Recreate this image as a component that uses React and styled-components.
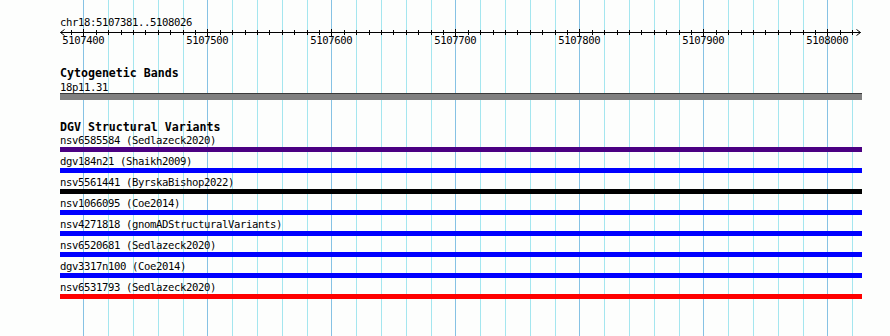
import React from 'react'
import styled, { createGlobalStyle } from 'styled-components'

const GlobalStyle = createGlobalStyle`
    html, body {
        margin: 0;
        padding: 0;
        background: #fdfefd;
    }
`

const START = 5107381
const END = 5108026
const PX_PER_BP = 1.24
const TRACK_LEFT = 60
const TRACK_WIDTH = 802
const ORIGIN = 83.3 - (5107400 - START) * PX_PER_BP

const toX = (bp) => ORIGIN + (bp - START) * PX_PER_BP
const crisp = (x) => Math.round(x) + 0.5

const variants = [
    { id: 'nsv6585584', study: 'Sedlazeck2020', color: '#4b0082' },
    { id: 'dgv184n21', study: 'Shaikh2009', color: '#0000ff' },
    { id: 'nsv5561441', study: 'ByrskaBishop2022', color: '#000000' },
    { id: 'nsv1066095', study: 'Coe2014', color: '#0000ff' },
    { id: 'nsv4271818', study: 'gnomADStructuralVariants', color: '#0000ff' },
    { id: 'nsv6520681', study: 'Sedlazeck2020', color: '#0000ff' },
    { id: 'dgv3317n100', study: 'Coe2014', color: '#0000ff' },
    { id: 'nsv6531793', study: 'Sedlazeck2020', color: '#ff0000' },
]

const Page = styled.div`
    position: relative;
    width: 890px;
    height: 336px;
    overflow: hidden;
    background: #fdfefd;
    font-family: "DejaVu Sans Mono", "Liberation Mono", monospace;
    color: #000;
`

const GridLayer = styled.svg`
    position: absolute;
    top: 0;
    left: 0;
    z-index: 0;
`

const Content = styled.div`
    position: relative;
    z-index: 1;
    display: flex;
    flex-direction: column;
    padding-top: 16px;
    padding-left: ${TRACK_LEFT}px;
    width: ${TRACK_WIDTH}px;
`

const Small = styled.div`
    font-size: 10.6px;
    letter-spacing: -0.38px;
    line-height: 12px;
    height: 12px;
    white-space: pre;
    margin-top: ${(p) => p.$top || 0}px;
`

const TrackTitle = styled.div`
    font-size: 11.6px;
    font-weight: bold;
    line-height: 14px;
    height: 14px;
    white-space: pre;
    margin-top: ${(p) => p.$top || 0}px;
`

const Ruler = styled.svg`
    display: block;
    margin-left: -${TRACK_LEFT}px;
    overflow: visible;
`

const Band = styled.div`
    height: 6px;
    background: #808080;
    border-top: 1px solid #3a3a3a;
`

const Row = styled.div`
    display: flex;
    flex-direction: column;
    height: 21px;
`

const Bar = styled.div`
    height: 5px;
    margin-top: 1px;
    background: ${(p) => p.$color};
`

const Grid = () => {
    const lines = []
    for (let bp = 5107400; bp <= END; bp += 20) {
        const major = bp % 100 === 0
        lines.push(
            <line
                key={bp}
                x1={crisp(toX(bp))}
                x2={crisp(toX(bp))}
                y1={0}
                y2={336}
                stroke={major ? '#86c2e4' : '#a4e6ef'}
                strokeWidth={1}
            />
        )
    }
    return (
        <GridLayer width={890} height={336}>
            {lines}
        </GridLayer>
    )
}

const Scale = () => {
    const ticks = []
    const labels = []
    for (let bp = 5107390; bp <= END; bp += 10) {
        const major = bp % 100 === 0
        const x = crisp(toX(bp))
        ticks.push(<line key={bp} x1={x} x2={x} y1={major ? 1 : 2} y2={major ? 8 : 7} stroke="#000" />)
        if (major) {
            labels.push(
                <text
                    key={'l' + bp}
                    x={toX(bp)}
                    y={16}
                    textAnchor="middle"
                    fontSize="10.6"
                    letterSpacing="-0.38"
                    fontFamily='"DejaVu Sans Mono", monospace'
                >
                    {bp}
                </text>
            )
        }
    }
    const left = TRACK_LEFT + 0.5
    const right = TRACK_LEFT + TRACK_WIDTH - 1.5
    return (
        <Ruler width={890} height={22}>
            <line x1={left} x2={right} y1={4.5} y2={4.5} stroke="#000" />
            <polyline points={`${left + 4},1.5 ${left},4.5 ${left + 4},7.5`} fill="none" stroke="#000" />
            <polyline points={`${right - 4},1.5 ${right},4.5 ${right - 4},7.5`} fill="none" stroke="#000" />
            {ticks}
            {labels}
        </Ruler>
    )
}

const App = () => {
    return (
        <Page>
            <GlobalStyle />
            <Grid />
            <Content>
                <Small>{'chr18:5107381..5108026'}</Small>
                <Scale />
                <TrackTitle $top={16}>{'Cytogenetic Bands'}</TrackTitle>
                <Small $top={1}>{'18p11.31'}</Small>
                <Band />
                <TrackTitle $top={20}>{'DGV Structural Variants'}</TrackTitle>
                {variants.map((v) => (
                    <Row key={v.id}>
                        <Small>{`${v.id} (${v.study})`}</Small>
                        <Bar $color={v.color} />
                    </Row>
                ))}
            </Content>
        </Page>
    )
}

export default App
